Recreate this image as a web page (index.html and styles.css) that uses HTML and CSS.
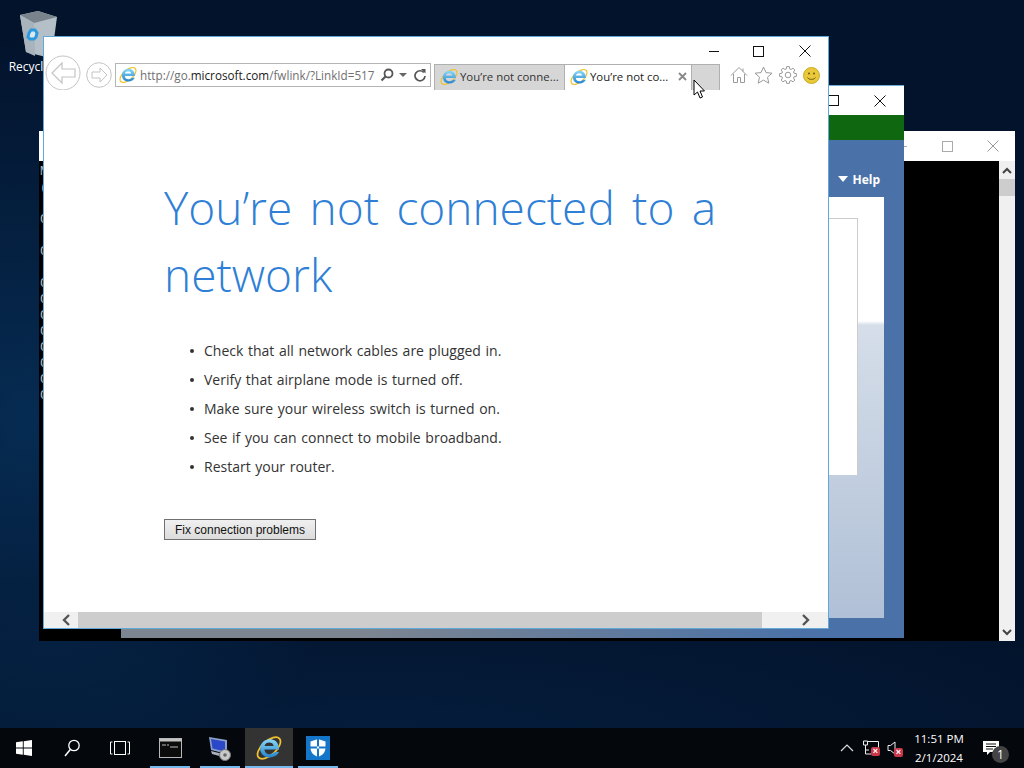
FILE: index.html
```html
<!DOCTYPE html>
<html lang="en">
<head>
  <meta charset="UTF-8" />
  <title>You’re not connected to a network</title>
  <link rel="stylesheet" href="styles.css">
</head>
<body>

  <!-- shared icons -->
  <svg class="defs" width="0" height="0">
    <defs>
      <linearGradient id="ie-blue" x1="0" y1="0" x2="0" y2="1">
        <stop offset="0" stop-color="#8ad8f8"/>
        <stop offset="1" stop-color="#2484cc"/>
      </linearGradient>
      <symbol id="ie-logo" viewBox="0 0 24 24">
        <ellipse cx="12" cy="12" rx="13" ry="6.500" transform="rotate(-42 12 12)" fill="none" stroke="#f0c22c" stroke-width="1.600"/>
        <g transform="translate(-1.200 -2.600) scale(1.100)">
          <path d="M18.300 14.500H8.200c0.200 4.400 5.600 5.200 8.600 2.200h3.600c-2.600 6.200-14.600 6.600-15.800-2.200C4 7 12.500 3.600 17.600 7.400c1.600 1.300 2.800 3.600 2.800 7.100h-2.100zM8.300 11.500h7.600c-0.400-3.800-7-3.800-7.600 0z" fill="url(#ie-blue)"/>
        </g>
      </symbol>
    </defs>
  </svg>

  <div class="desktop">
    <!-- Desktop icon -->
    <div class="desk-icon">
      <svg width="40" height="50" viewBox="0 0 40 50">
        <path d="M0 6L18 2l19 6-5 37-6 3-20-5z" fill="#b4bfc7"/>
        <path d="M0 6L18 2l19 6-23 6z" fill="#79838c"/>
        <path d="M0 6l14 8 1 33-9-4z" fill="#a8b3bb"/>
        <path d="M9 24l2-3 4 0 2 3-1 4-2 2-4 0-2-2z" fill="#dfe8ee" stroke="#2a9ae0" stroke-width="3"/>
      </svg>
      <span>Recycle Bin</span>
    </div>

    <!-- Console window, at the back -->
    <div class="window console">
      <div class="titlebar">
        <svg width="11" height="11" viewBox="0 0 11 11"><path d="M0 5.500h10" stroke="#aaa"/></svg>
        <span class="cap-max"></span>
        <svg class="cap-x" width="12" height="12" viewBox="0 0 12 12"><path d="M.5.500l11 11M11.500.500l-11 11" stroke="#999" fill="none"/></svg>
      </div>
      <div class="console-body">
        <pre class="console-text">Microsoft
(c)

C:\
 '
C:\

C:\
C:\
C:\
C:\
C:\
C:\
C:\
C:\</pre>
        <div class="vscroll">
          <svg width="10" height="7" viewBox="0 0 10 7"><path d="M1 6l4-4 4 4" fill="none" stroke="#444" stroke-width="2"/></svg>
          <div class="vthumb"></div>
          <svg class="vdown" width="10" height="7" viewBox="0 0 10 7"><path d="M1 1l4 4 4-4" fill="none" stroke="#444" stroke-width="2"/></svg>
        </div>
      </div>
    </div>

    <!-- Green installer window, behind the browser -->
    <div class="window installer">
      <div class="titlebar">
        <span class="cap-max dark"></span>
        <svg class="cap-x" width="12" height="12" viewBox="0 0 12 12"><path d="M.500.500l11 11M11.500.500l-11 11" stroke="#111" fill="none"/></svg>
      </div>
      <div class="green-bar"></div>
      <div class="installer-body">
        <div class="help-row"><span class="help-arrow"></span>Help</div>
        <div class="panel">
          <div class="panel-box"></div>
        </div>
      </div>
    </div>

    <!-- Browser window -->
    <div class="window browser">
      <div class="browser-caption">
        <svg class="cap-min" width="11" height="11" viewBox="0 0 11 11"><path d="M0 5.500h10" stroke="#111"/></svg>
        <span class="cap-max dark"></span>
        <svg width="12" height="12" viewBox="0 0 12 12"><path d="M.500.500l11 11M11.500.500l-11 11" stroke="#111" fill="none"/></svg>
      </div>

      <div class="toolbar">
        <div class="nav-back">
          <svg width="36" height="36" viewBox="0 0 36 36">
            <circle cx="18" cy="18" r="17" fill="#fff" stroke="#c4c4c4"/>
            <path d="M17 8L7 18l10 10v-6h13v-8H17z" fill="#fff" stroke="#c4c4c4" stroke-width="1.200"/>
          </svg>
        </div>
        <svg class="nav-forward" width="26" height="26" viewBox="0 0 26 26">
          <circle cx="13" cy="13" r="12.300" fill="#fff" stroke="#c4c4c4"/>
          <path d="M14 6l7 7-7 7v-4H6v-6h8z" fill="#fff" stroke="#c4c4c4"/>
        </svg>
        <div class="address">
          <svg class="ie-small" width="18" height="18"><use href="#ie-logo"/></svg>
          <span class="url">http://go.<b>microsoft.com</b>/fwlink/?LinkId=517</span>
          <svg width="14" height="14" viewBox="0 0 14 14"><circle cx="8.500" cy="5.500" r="4" fill="none" stroke="#555" stroke-width="1.800"/><path d="M5.500 8.500L1.500 12.500" stroke="#555" stroke-width="2.200"/></svg>
          <span class="addr-drop"></span>
          <svg width="12" height="14" viewBox="0 0 12 14"><path d="M9.800 4.500A5 5 0 1 0 11 8" fill="none" stroke="#555" stroke-width="1.700"/><path d="M7 1h4.500v4.500z" fill="#555"/></svg>
        </div>
        <div class="tabs">
          <div class="tab">
            <svg width="18" height="18"><use href="#ie-logo"/></svg>
            <span>You’re not conne...</span>
          </div>
          <div class="tab active">
            <svg width="18" height="18"><use href="#ie-logo"/></svg>
            <span>You’re not co...</span>
            <svg class="tab-close" width="9" height="9" viewBox="0 0 9 9"><path d="M1 1l7 7M8 1L1 8" stroke="#888" stroke-width="1.800"/></svg>
          </div>
          <div class="tab-new"></div>
        </div>
        <div class="tools">
          <svg width="18" height="18" viewBox="0 0 18 18"><path d="M1 9.500L9 1.500l8 8M3.500 8v8.500h4v-5h3v5h4V8M13 2.500v3" fill="none" stroke="#9a9a9a"/></svg>
          <svg width="19" height="18" viewBox="0 0 19 18"><path d="M9.500 1l2.500 5.600 6 .6-4.500 4 1.300 6-5.300-3.100-5.300 3.100 1.300-6-4.500-4 6-.6z" fill="none" stroke="#9a9a9a"/></svg>
          <svg width="18" height="18" viewBox="0 0 18 18"><circle cx="9" cy="9" r="2.800" fill="none" stroke="#9a9a9a"/><path d="M7.260 2.940L7.670.6h2.660l.41 2.340 1.310.55L14 2.120 15.880 4l-1.370 1.950.55 1.310 2.340.41v2.660l-2.340.41-.55 1.310L15.880 14 14 15.880l-1.950-1.370-1.310.55-.41 2.340H7.670l-.41-2.340-1.310-.55L4 15.880 2.120 14l1.370-1.950-.55-1.310-2.340-.41V7.670l2.340-.41.55-1.310L2.120 4 4 2.120l1.950 1.370z" fill="none" stroke="#9a9a9a"/></svg>
          <svg width="17" height="17" viewBox="0 0 17 17"><circle cx="8.500" cy="8.500" r="8" fill="#e9c93a" stroke="#c9a82a"/><circle cx="6" cy="6.500" r="1" fill="#6b5a10"/><circle cx="11" cy="6.500" r="1" fill="#6b5a10"/><path d="M4.500 10.500c1.500 2.500 6.500 2.500 8 0" fill="none" stroke="#6b5a10"/></svg>
        </div>
      </div>

      <!-- Page content -->
      <div class="page">
        <h1>You’re not connected to a network</h1>
        <ul class="checks">
          <li>Check that all network cables are plugged in.</li>
          <li>Verify that airplane mode is turned off.</li>
          <li>Make sure your wireless switch is turned on.</li>
          <li>See if you can connect to mobile broadband.</li>
          <li>Restart your router.</li>
        </ul>
        <button class="fix-btn">Fix connection problems</button>
      </div>

      <div class="hscroll">
        <div class="harrow">
          <svg width="10" height="12" viewBox="0 0 10 12"><path d="M8 1L3 6l5 5" fill="none" stroke="#555" stroke-width="2.400"/></svg>
        </div>
        <div class="hthumb"></div>
        <div class="harrow right">
          <svg width="10" height="12" viewBox="0 0 10 12"><path d="M2 1l5 5-5 5" fill="none" stroke="#555" stroke-width="2.400"/></svg>
        </div>
      </div>
    </div>

    <!-- Mouse pointer -->
    <svg class="pointer" width="13" height="20" viewBox="0 0 13 20">
      <path d="M1 1v15l3.500-3 2.500 6 2.500-1-2.500-6h4.500z" fill="#fff" stroke="#000"/>
    </svg>
  </div>

  <!-- Taskbar -->
  <div class="taskbar">
    <div class="task-btn">
      <svg width="16" height="16" viewBox="0 0 16 16"><path d="M0 2.300l6.800-1v6.200H0zM7.700 1.200L16 0v7.500H7.700zM0 8.400h6.800v6.300l-6.800-1zM7.700 8.400H16V16l-8.300-1.200z" fill="#fff"/></svg>
    </div>
    <div class="task-btn">
      <svg width="16" height="18" viewBox="0 0 16 18"><circle cx="10" cy="6.500" r="5.200" fill="none" stroke="#fff" stroke-width="1.300"/><path d="M6.300 10.500L1 17" stroke="#fff" stroke-width="1.500"/></svg>
    </div>
    <div class="task-btn">
      <svg width="20" height="14" viewBox="0 0 20 14"><path d="M2.500 1H.5v12h2M17.500 1h2v12h-2" fill="none" stroke="#fff"/><rect x="4.500" y=".5" width="11" height="13" fill="none" stroke="#fff"/></svg>
    </div>
    <div class="task-btn app first running">
      <svg width="23" height="20" viewBox="0 0 23 20"><rect x=".5" y=".5" width="22" height="19" fill="#0c0c0c" stroke="#b8b8b8"/><rect x="1" y="1" width="21" height="2.500" fill="#c4c4c4"/><path d="M3 7h4M8 7h2M11 9h8" stroke="#bbb"/></svg>
    </div>
    <div class="task-btn app running">
      <svg width="25" height="26" viewBox="0 0 25 26"><path d="M1 2l18 3v14L3 15z" fill="#8aa0c8"/><path d="M3 4l14 2.500v10L4.500 13.500z" fill="#2a48c8"/><path d="M3 16l16 4-4 2-11-3z" fill="#aab0bc"/><circle cx="17" cy="20" r="5.500" fill="#c9c9c9" stroke="#777"/><circle cx="17" cy="20" r="1.800" fill="#666"/></svg>
    </div>
    <div class="task-btn app running current">
      <svg width="26" height="26"><use href="#ie-logo"/></svg>
    </div>
    <div class="task-btn app running">
      <svg width="24" height="24" viewBox="0 0 24 24"><rect width="24" height="24" fill="#1476c8"/><path d="M12 3l7.500 2.500V12c0 4.500-3.500 7.500-7.500 9-4-1.500-7.500-4.500-7.500-9V5.500z" fill="#fff"/><path d="M11 3v18h2V3zM4 10.500h16v2H4z" fill="#1476c8"/></svg>
    </div>

    <div class="tray">
      <svg class="tray-chevron" width="14" height="8" viewBox="0 0 14 8"><path d="M1 7l6-6 6 6" fill="none" stroke="#ddd" stroke-width="1.200"/></svg>
      <div class="tray-icon">
        <svg width="18" height="16" viewBox="0 0 18 16"><path d="M5 1.500h11.500v9H10M1.500 1h4v4h-4zM3.500 5v9H9M3.500 10H7" fill="none" stroke="#eee"/></svg>
        <span class="tray-x">×</span>
      </div>
      <div class="tray-icon sound">
        <svg width="10" height="14" viewBox="0 0 10 14"><path d="M1 4.500h2.500L8 1v12L3.500 9.500H1z" fill="none" stroke="#eee"/></svg>
        <span class="tray-x">×</span>
      </div>
      <div class="clock">
        <div>11:51 PM</div>
        <div>2/1/2024</div>
      </div>
      <div class="notify">
        <svg width="16" height="14" viewBox="0 0 16 14"><path d="M0 0h16v11H7l-3 3v-3H0z" fill="#fff"/><path d="M3 3h10M3 5.500h10M3 8h7" stroke="#111"/></svg>
        <span class="notify-count">1</span>
      </div>
    </div>
  </div>

</body>
</html>
```

FILE: styles.css
```css
/* Basic Reset & Font */
html, body {
  margin: 0;
  padding: 0;
  height: 100%;
  overflow: hidden;
}
body {
  display: flex;
  flex-direction: column;
  font-family: 'Open Sans', sans-serif;
  background: #000;
}
svg {
  flex: none;
}
.defs {
  position: absolute;
}
/* Desktop */
.desktop {
  position: relative;
  flex: 1;
  background:
    radial-gradient(ellipse 360px 380px at 30px 420px, rgba(10, 80, 140, 0.4), transparent),
    radial-gradient(ellipse 800px 170px at 380px 740px, rgba(10, 70, 125, 0.2), transparent),
    #03132c;
}
.desk-icon {
  position: absolute;
  left: 2px;
  top: 9px;
  width: 76px;
  display: flex;
  flex-direction: column;
  align-items: center;
  color: #fff;
  font-size: 12px;
}
.desk-icon span {
  white-space: nowrap;
  line-height: 16px;
}
/* Windows */
.window {
  position: absolute;
  display: flex;
  flex-direction: column;
  box-sizing: border-box;
}
.titlebar {
  height: 30px;
  flex: none;
  background: #fff;
  position: relative;
  display: flex;
  align-items: center;
  justify-content: flex-end;
}
.cap-max {
  display: block;
  width: 9px;
  height: 9px;
  border: 1px solid #aaa;
}
.cap-max.dark {
  border-color: #111;
}
/* Console */
.console {
  left: 39px;
  top: 131px;
  width: 976px;
  height: 510px;
}
.console .titlebar {
  gap: 34px;
  padding-right: 16px;
}
.console-body {
  flex: 1;
  display: flex;
  background: #000;
}
.console-text {
  flex: 1;
  margin: 3px 0 0 1px;
  color: #b8b8b8;
  font: 13px/16px 'Liberation Mono', monospace;
}
.vscroll {
  width: 16px;
  background: #f0f0f0;
  display: flex;
  flex-direction: column;
  align-items: center;
  padding-top: 6px;
}
.vthumb {
  width: 16px;
  height: 17px;
  margin-top: 5px;
  background: #cdcdcd;
}
.vdown {
  margin-top: auto;
  margin-bottom: 5px;
}
/* Installer */
.installer {
  left: 121px;
  top: 85px;
  width: 783px;
  height: 553px;
  border-top: 1px solid #6fb0d8;
}
.installer .titlebar {
  gap: 35px;
  padding-right: 18px;
  height: 29px;
}
.green-bar {
  height: 25px;
  flex: none;
  background: #0f680f;
}
.installer-body {
  flex: 1;
  display: flex;
  flex-direction: column;
  background: linear-gradient(90deg, #7d8590 0, #7d8590 30%, #4a72a8 88%);
  padding: 0 20px 20px 0;
}
.help-row {
  height: 57px;
  flex: none;
  box-sizing: border-box;
  display: flex;
  align-items: flex-end;
  justify-content: flex-end;
  gap: 4px;
  padding: 0 4px 9px 0;
  color: #fff;
  font: bold 12px/17px 'Open Sans', sans-serif;
}
.help-arrow {
  width: 0;
  height: 0;
  margin-bottom: 6px;
  border-left: 5px solid transparent;
  border-right: 5px solid transparent;
  border-top: 6px solid #fff;
}
.panel {
  flex: 1;
  padding: 21px 26px 143px 0;
  background: linear-gradient(#fff 0, #fff 124px, #d5dee9 128px, #b0c0d6 100%);
}
.panel-box {
  height: 100%;
  box-sizing: border-box;
  background: #fff;
  border-top: 1px solid #ccc;
  border-right: 1px solid #ccc;
}
/* Browser */
.browser {
  left: 44px;
  top: 37px;
  width: 784px;
  height: 591px;
  background: #fff;
  outline: 1px solid #5fa8d8;
}
.browser-caption {
  height: 26px;
  flex: none;
  box-sizing: border-box;
  display: flex;
  align-items: center;
  justify-content: flex-end;
  gap: 35px;
  padding: 2px 17px 0 0;
}
.cap-min {
  margin-right: -2px;
}
.toolbar {
  height: 27px;
  flex: none;
  display: flex;
  align-items: flex-start;
  position: relative;
  padding-left: 71px;
}
/* back button hangs over the left side and is cut at the toolbar bottom */
.nav-back {
  position: absolute;
  left: 1px;
  top: -8px;
  width: 36px;
  height: 35px;
  overflow: hidden;
}
.nav-forward {
  position: absolute;
  left: 42px;
  top: -1px;
}
.address {
  width: 316px;
  height: 24px;
  box-sizing: border-box;
  border: 1px solid #b5b5b5;
  display: flex;
  align-items: center;
  padding: 0 4px 0 3px;
}
.url {
  flex: none;
  width: 237px;
  margin-left: 3px;
  margin-right: 3px;
  font-size: 11.700px;
  color: #707070;
  white-space: nowrap;
}
.url b {
  font-weight: 400;
  color: #1a1a1a;
}
.addr-drop {
  width: 0;
  height: 0;
  margin: 0 7px 0 5px;
  border-left: 4px solid transparent;
  border-right: 4px solid transparent;
  border-top: 4px solid #666;
}
.tabs {
  display: flex;
  width: 286px;
  height: 26px;
  margin: 1px 0 0 3px;
  font-size: 11.400px;
  color: #333;
  box-sizing: border-box;
}
.tab {
  width: 130px;
  flex: none;
  box-sizing: border-box;
  display: flex;
  align-items: center;
  gap: 2px;
  padding: 0 0 2px 5px;
  background: #d6d6d6;
  border-top: 1px solid #b0b0b0;
  border-left: 1px solid #b0b0b0;
  white-space: nowrap;
}
.tab.active {
  width: 128px;
  background: #fff;
  color: #222;
  border-right: 1px solid #b0b0b0;
  position: relative;
}
.tab-close {
  position: absolute;
  right: 4px;
  top: 7px;
}
.tab-new {
  flex: 1;
  background: #d6d6d6;
  border-top: 1px solid #b0b0b0;
  border-right: 1px solid #b0b0b0;
}
.tools {
  display: flex;
  align-items: center;
  gap: 6px;
  margin-left: 10px;
  height: 24px;
}
/* Page */
.page {
  flex: 1;
  padding: 0 0 0 120px;
  overflow: hidden;
}
h1 {
  margin: 84px 0 0 0;
  width: 600px;
  color: #2f7fd6;
  font-family: 'Open Sans', sans-serif;
  font-weight: 300;
  font-size: 46px;
  line-height: 66.500px;
  word-spacing: 5.400px;
}
.checks {
  list-style: none;
  margin: 29px 0 0 0;
  padding: 0 0 0 26px;
  font-size: 14px;
  word-spacing: 1px;
  color: #333;
}
.checks li {
  height: 29px;
  line-height: 29px;
  padding-left: 14px;
  position: relative;
}
.checks li::before {
  content: '';
  position: absolute;
  left: 0;
  top: 13px;
  width: 4px;
  height: 4px;
  border-radius: 50%;
  background: #333;
}
.fix-btn {
  display: block;
  margin-top: 38px;
  width: 152px;
  height: 21px;
  padding: 0;
  font: 12px 'Liberation Sans', sans-serif;
  color: #111;
  background: linear-gradient(#f0f0f0, #dcdcdc);
  border: 1px solid #707070;
}
.hscroll {
  height: 16px;
  flex: none;
  display: flex;
  background: #f0f0f0;
}
.harrow {
  width: 34px;
  display: flex;
  align-items: center;
  justify-content: center;
  padding-left: 10px;
  box-sizing: border-box;
}
.harrow.right {
  width: 66px;
  padding-left: 22px;
}
.hthumb {
  flex: 1;
  background: #cdcdcd;
}
.pointer {
  position: absolute;
  left: 693px;
  top: 79px;
}
/* Taskbar */
.taskbar {
  height: 40px;
  flex: none;
  display: flex;
  background: #04070c;
}
.task-btn {
  width: 48px;
  height: 40px;
  box-sizing: border-box;
  display: flex;
  align-items: center;
  justify-content: center;
}
.task-btn.app {
  margin-right: 1px;
  position: relative;
}
.task-btn.first {
  margin-left: 2px;
  margin-right: 2px;
}
.task-btn.running::after {
  content: '';
  position: absolute;
  left: 4px;
  right: 4px;
  bottom: 0;
  height: 2px;
  background: #76b9ed;
}
.task-btn.current {
  background: #333;
}
.task-btn.current::after {
  left: 0;
  right: 0;
}
.tray {
  margin-left: auto;
  display: flex;
  align-items: center;
  color: #fff;
  font-size: 11.500px;
}
.tray-chevron {
  margin-right: 8px;
}
.tray-icon {
  position: relative;
  display: flex;
  margin-right: 7px;
}
.tray-x {
  position: absolute;
  right: 0;
  bottom: 0;
  width: 9px;
  height: 9px;
  background: #c8374a;
  border-radius: 2px;
  color: #fff;
  font: bold 9px/9px 'Liberation Sans', sans-serif;
  text-align: center;
}
.tray-icon.sound .tray-x {
  right: -6px;
  bottom: -2px;
}
.clock {
  width: 70px;
  text-align: center;
  line-height: 19px;
}
.notify {
  position: relative;
  box-sizing: border-box;
  width: 48px;
  display: flex;
  justify-content: center;
  padding-right: 18px;
  margin-left: 2px;
}
.notify-count {
  position: absolute;
  left: 16px;
  top: 5px;
  width: 17px;
  height: 17px;
  border-radius: 50%;
  background: #444;
  color: #fff;
  font: 12px/17px 'Open Sans', sans-serif;
  text-align: center;
}
```
